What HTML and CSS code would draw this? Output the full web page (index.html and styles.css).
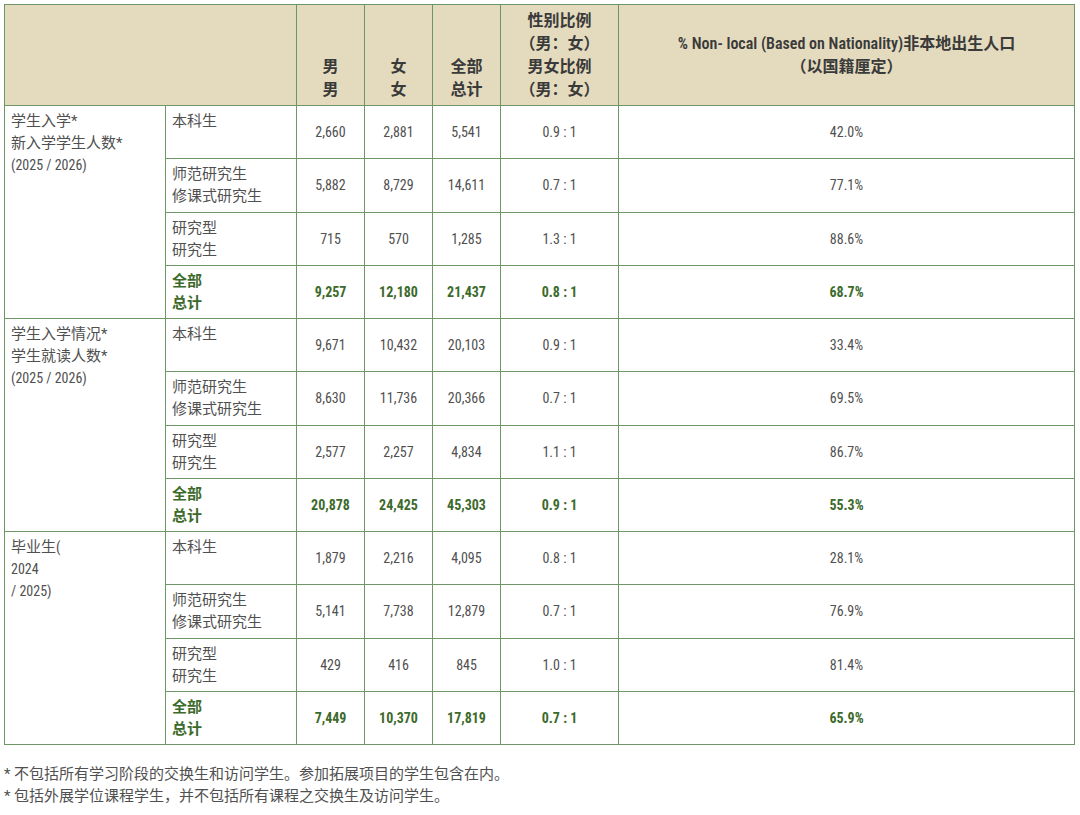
FILE: index.html
```html
<!DOCTYPE html>
<html lang="zh">
<head>
<meta charset="utf-8">
<title>学生人数</title>
<link rel="stylesheet" href="styles.css">
</head>
<body>
<table class="stats">
  <colgroup>
    <col class="c-group"><col class="c-level"><col class="c-num"><col class="c-num"><col class="c-num"><col class="c-ratio"><col class="c-pct">
  </colgroup>
  <thead>
    <tr>
      <th colspan="2"></th>
      <th>男<br>男</th>
      <th>女<br>女</th>
      <th>全部<br>总计</th>
      <th>性别比例<br>（男：女）<br>男女比例<br>（男：女）</th>
      <th class="top">% Non- local (Based on Nationality)非本地出生人口<br>（以国籍厘定）</th>
    </tr>
  </thead>
  <tbody>
    <tr>
      <td class="group" rowspan="4">学生入学*<br>新入学学生人数*<br><span class="lat">(2025 / 2026)</span></td>
      <td class="level">本科生</td><td>2,660</td><td>2,881</td><td>5,541</td><td>0.9 : 1</td><td>42.0%</td>
    </tr>
    <tr><td class="level">师范研究生<br>修课式研究生</td><td>5,882</td><td>8,729</td><td>14,611</td><td>0.7 : 1</td><td>77.1%</td></tr>
    <tr><td class="level">研究型<br>研究生</td><td>715</td><td>570</td><td>1,285</td><td>1.3 : 1</td><td>88.6%</td></tr>
    <tr class="total"><td class="level">全部<br>总计</td><td>9,257</td><td>12,180</td><td>21,437</td><td>0.8 : 1</td><td>68.7%</td></tr>

    <tr>
      <td class="group" rowspan="4">学生入学情况*<br>学生就读人数*<br><span class="lat">(2025 / 2026)</span></td>
      <td class="level">本科生</td><td>9,671</td><td>10,432</td><td>20,103</td><td>0.9 : 1</td><td>33.4%</td>
    </tr>
    <tr><td class="level">师范研究生<br>修课式研究生</td><td>8,630</td><td>11,736</td><td>20,366</td><td>0.7 : 1</td><td>69.5%</td></tr>
    <tr><td class="level">研究型<br>研究生</td><td>2,577</td><td>2,257</td><td>4,834</td><td>1.1 : 1</td><td>86.7%</td></tr>
    <tr class="total"><td class="level">全部<br>总计</td><td>20,878</td><td>24,425</td><td>45,303</td><td>0.9 : 1</td><td>55.3%</td></tr>

    <tr>
      <td class="group" rowspan="4">毕业生<span class="lat">(<br>2024<br>/ 2025)</span></td>
      <td class="level">本科生</td><td>1,879</td><td>2,216</td><td>4,095</td><td>0.8 : 1</td><td>28.1%</td>
    </tr>
    <tr><td class="level">师范研究生<br>修课式研究生</td><td>5,141</td><td>7,738</td><td>12,879</td><td>0.7 : 1</td><td>76.9%</td></tr>
    <tr><td class="level">研究型<br>研究生</td><td>429</td><td>416</td><td>845</td><td>1.0 : 1</td><td>81.4%</td></tr>
    <tr class="total"><td class="level">全部<br>总计</td><td>7,449</td><td>10,370</td><td>17,819</td><td>0.7 : 1</td><td>65.9%</td></tr>
  </tbody>
</table>
<div class="notes">
  <p>* 不包括所有学习阶段的交换生和访问学生。参加拓展项目的学生包含在内。</p>
  <p>* 包括外展学位课程学生，并不包括所有课程之交换生及访问学生。</p>
</div>
</body>
</html>
```

FILE: styles.css
```css
html, body {
  margin: 0;
  padding: 0;
  background: #ffffff;
}
body {
  padding: 4px 5px 0 4px;
  font-family: "Roboto Condensed", "Noto Sans CJK SC", sans-serif;
  font-size: 15px;
  color: #505050;
}
.stats {
  border-collapse: collapse;
  table-layout: fixed;
  width: 1071px;
  border: 1px solid #8fb085;
}
.c-group { width: 161px; }
.c-level { width: 131px; }
.c-num { width: 68px; }
.c-ratio { width: 118px; }
.c-pct { width: auto; }

.stats th,
.stats td {
  border: 1px solid #6f9666;
  font-family: "Roboto Condensed", "Noto Sans CJK SC", sans-serif;
}
.stats th {
  background: #e4dbbe;
  color: #3a3a3a;
  font-size: 16px;
  font-weight: 600;
  line-height: 23px;
  height: 92px;
  padding: 4px 2px 4px;
  vertical-align: bottom;
  text-align: center;
}
.stats th.top {
  vertical-align: middle;
}
.stats td {
  height: 44.25px;
  font-size: 14px;
  line-height: 22px;
  padding: 4px 6px;
  text-align: center;
  vertical-align: middle;
}
.stats td.group,
.stats td.level {
  font-size: 15px;
  text-align: left;
  vertical-align: top;
}
.stats td .lat {
  font-size: 14px;
}
.stats tr.total td {
  color: #3c6a2b;
  font-weight: 700;
}
.stats tr.total td.group { color: #505050; font-weight: 400; }
.notes {
  margin-top: 18px;
  color: #505050;
  font-size: 15px;
  line-height: 22px;
}
.notes p { margin: 0; }
```
